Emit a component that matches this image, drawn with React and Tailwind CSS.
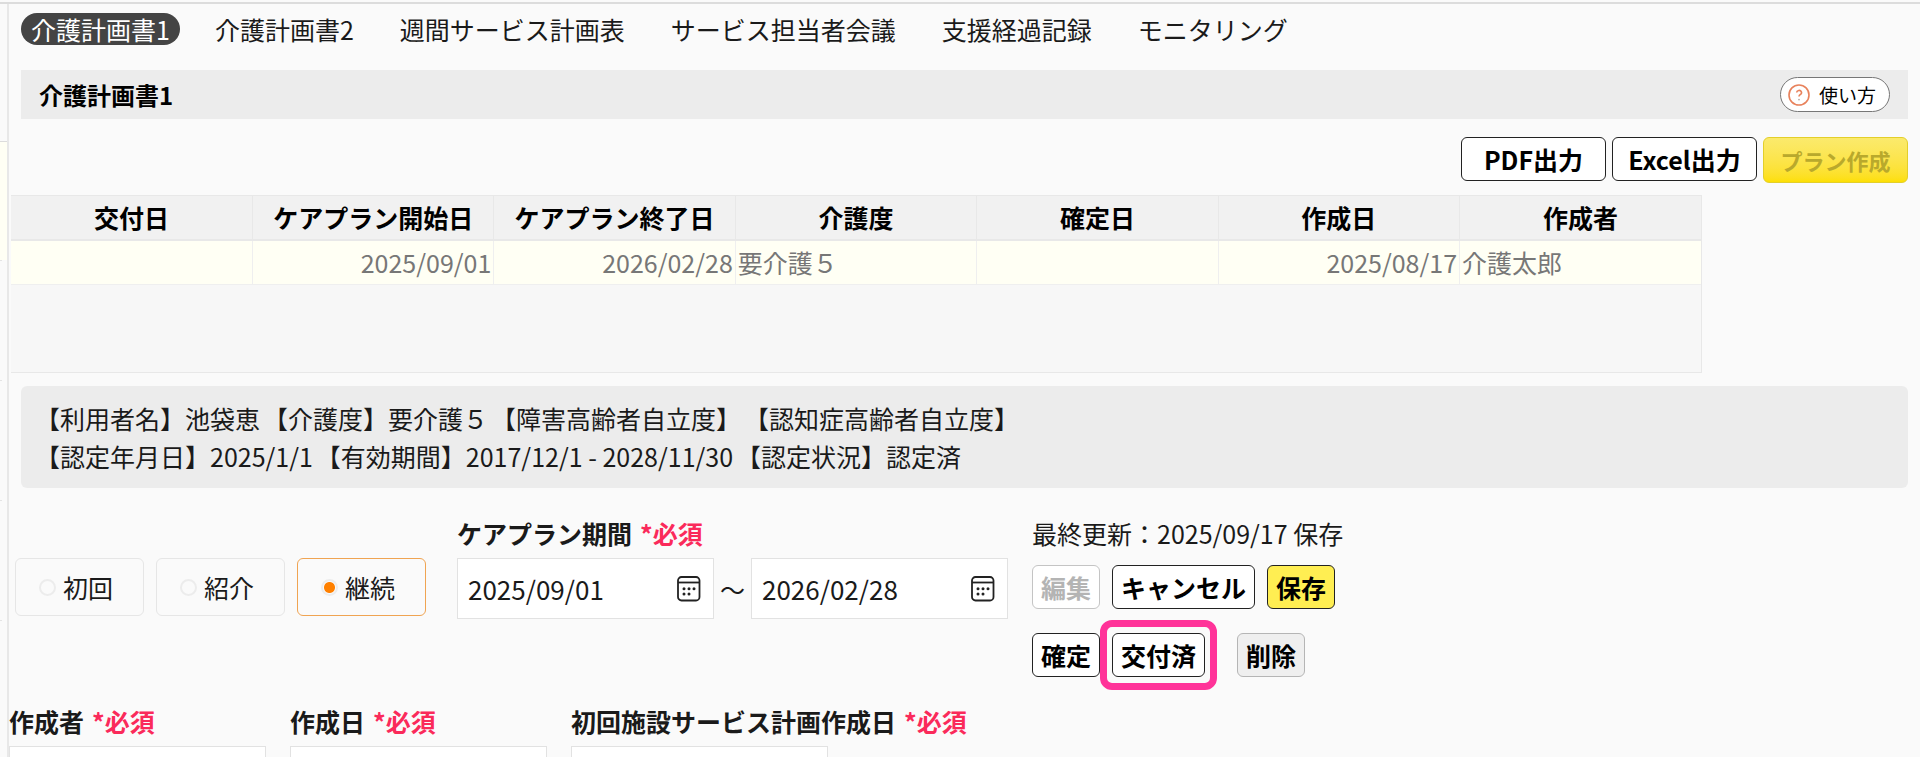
import React from 'react';
import clsx from 'clsx';

const tabs = [
  '介護計画書1',
  '介護計画書2',
  '週間サービス計画表',
  'サービス担当者会議',
  '支援経過記録',
  'モニタリング',
];

const columns = [
  { key: 'issued', label: '交付日', align: 'text-right' },
  { key: 'start', label: 'ケアプラン開始日', align: 'text-right' },
  { key: 'end', label: 'ケアプラン終了日', align: 'text-right' },
  { key: 'level', label: '介護度', align: 'text-left' },
  { key: 'fixed', label: '確定日', align: 'text-right' },
  { key: 'created', label: '作成日', align: 'text-right' },
  { key: 'author', label: '作成者', align: 'text-left' },
];

const plans = [
  {
    issued: '',
    start: '2025/09/01',
    end: '2026/02/28',
    level: '要介護５',
    fixed: '',
    created: '2025/08/17',
    author: '介護太郎',
  },
];

const userInfo = [
  ['【利用者名】池袋恵', '【介護度】要介護５', '【障害高齢者自立度】', '【認知症高齢者自立度】'],
  ['【認定年月日】2025/1/1', '【有効期間】2017/12/1 - 2028/11/30', '【認定状況】認定済'],
];

const planTypes = ['初回', '紹介', '継続'];

const HelpIcon = () => (
  <svg width="22" height="22" viewBox="0 0 22 22" fill="none" stroke="#e8825c" aria-hidden="true">
    <circle cx="11" cy="11" r="10" strokeWidth="1.6" />
    <path d="M8.7 8.6a2.4 2.2 0 1 1 3.6 1.9c-.9.5-1.3.9-1.3 2" strokeWidth="1.6" />
    <circle cx="11" cy="15.6" r=".9" fill="#b9a7a0" stroke="none" />
  </svg>
);

const CalendarIcon = () => (
  <svg width="24" height="26" viewBox="0 0 24 26" fill="none" stroke="#222" strokeWidth="1.8" aria-hidden="true">
    <rect x="1" y="1" width="21.5" height="23.5" rx="3.5" />
    <path d="M1 6.5h21.5" />
    <g fill="#222" stroke="none">
      <circle cx="7" cy="12.8" r="1.5" />
      <circle cx="12" cy="12.8" r="1.5" />
      <circle cx="17" cy="12.8" r="1.5" />
      <circle cx="7" cy="18" r="1.5" />
      <circle cx="12" cy="18" r="1.5" />
    </g>
  </svg>
);

const Required = () => <span className="ml-2 text-[#fa2a5a]">*必須</span>;

const DateInput = ({ id, label, value }) => (
  <div className="flex h-[61px] w-[257px] items-center border border-[#e2e2e2] bg-white pr-3 pl-[10px]">
    <input
      id={id}
      type="text"
      aria-label={label}
      defaultValue={value}
      className="min-w-0 flex-1 bg-transparent text-[26px] leading-9 outline-none"
    />
    <button type="button" aria-label="カレンダー">
      <CalendarIcon />
    </button>
  </div>
);

const variants = {
  default: 'border-[#222] bg-white text-black',
  primary: 'border-[#222] bg-[#ffee52] text-black',
  muted: 'border-[#b5b5b5] bg-[#efefef] text-black',
  disabled: 'border-[#c4c4c4] bg-white text-[#b4b4b4]',
};

const ActionButton = ({ variant = 'default', className, children, ...props }) => (
  <button
    type="button"
    className={clsx('h-11 rounded-md border px-2 font-bold', variants[variant], className)}
    {...props}
  >
    {children}
  </button>
);

const TextField = ({ id, label }) => (
  <div className="flex min-w-[257px] flex-col gap-[7px]">
    <label htmlFor={id} className="font-bold whitespace-nowrap">
      {label}
      <Required />
    </label>
    <input id={id} type="text" className="h-[61px] w-[257px] border border-[#e2e2e2] bg-white px-[10px]" />
  </div>
);

export default function App() {
  return (
    <div className="flex h-screen flex-col overflow-hidden border-t-2 border-[#fafafa] bg-[#fafafa] font-['Noto_Sans_CJK_JP',sans-serif] text-[25px] leading-9 text-[#1a1a1a]">
      <div className="flex flex-1 border-t-2 border-[#dcdcdc]">
        {/* 隣のパネルの端 */}
        <aside className="flex w-[9px] shrink-0 flex-col border-r-2 border-[#e8e8e8]">
          <div className="h-[138px] border-b border-[#dcdcdc]" />
          <div className="h-[118px] bg-[#fffff4]" />
          {[1, 2, 3, 4].map((row) => (
            <div key={row} className="h-30 w-[2px] border-t border-[#e4e4e4]" />
          ))}
        </aside>

        <main className="min-w-0 flex-1">
          <nav className="flex items-center gap-[46px] px-3 pt-[9px]">
            {tabs.map((tab, i) => (
              <a
                key={tab}
                href="#"
                className={clsx(
                  'leading-8 whitespace-nowrap',
                  i === 0 && '-mr-[11px] rounded-full bg-[#444] px-[10px] text-white'
                )}
              >
                {tab}
              </a>
            ))}
          </nav>

          <header className="mt-[25px] mr-3 ml-3 flex h-[49px] items-center justify-between bg-[#ececec] pr-[18px] pl-[18px]">
            <h1 className="text-2xl font-bold text-black">介護計画書1</h1>
            <button
              type="button"
              className="flex h-[35px] items-center gap-[9px] rounded-full border border-[#777] bg-white pr-[13px] pl-[7px] text-[19px] text-black"
            >
              <HelpIcon />
              使い方
            </button>
          </header>

          <div className="mt-[18px] mr-3 flex items-start justify-end gap-[6px]">
            <ActionButton className="w-[145px]">PDF出力</ActionButton>
            <ActionButton className="w-[145px]">Excel出力</ActionButton>
            <button
              type="button"
              disabled
              className="h-[46px] w-[145px] rounded-md border border-[#e3cf2a] bg-linear-to-b from-[#fbea6c] to-[#fddf00] text-[22px] font-bold text-[#b9a92c]"
            >
              プラン作成
            </button>
          </div>

          <div className="mt-3 ml-[2px] h-[178px] w-[1691px] max-w-full border border-l-0 border-[#e8e8e8] bg-[#f7f7f7]">
            <table className="w-full table-fixed border-collapse">
              <thead>
                <tr className="h-11 bg-[#f1f1f1] text-black">
                  {columns.map((col) => (
                    <th
                      key={col.key}
                      className="border-r border-b-2 border-[#e8e8e8] p-0 pb-[2px] font-bold last:border-r-0"
                    >
                      {col.label}
                    </th>
                  ))}
                </tr>
              </thead>
              <tbody>
                {plans.map((plan) => (
                  <tr key={plan.start} className="h-11 bg-[#fffff4] text-[#777]">
                    {columns.map((col) => (
                      <td
                        key={col.key}
                        className={clsx('border-r border-b border-[#efefef] px-[2px] py-0 last:border-r-0', col.align)}
                      >
                        {plan[col.key]}
                      </td>
                    ))}
                  </tr>
                ))}
              </tbody>
            </table>
          </div>

          <section className="mt-[13px] mr-3 ml-3 rounded-md bg-[#ececec] px-[14px] py-[13px]">
            {userInfo.map((line) => (
              <p key={line[0]} className="flex gap-[3px] leading-[38px] whitespace-nowrap">
                {line.map((item) => (
                  <span key={item}>{item}</span>
                ))}
              </p>
            ))}
          </section>

          <form>
            <div className="mt-[27px] flex items-start pl-[6px]">
              <fieldset className="mt-[43px] flex gap-3" aria-label="計画区分">
                {planTypes.map((type) => (
                  <label
                    key={type}
                    className="flex h-[58px] w-[129px] items-center gap-[7px] rounded-md border border-[#e6e6e6] pl-[23px] has-checked:border-[#f0a452]"
                  >
                    <input
                      type="radio"
                      name="planType"
                      defaultChecked={type === '継続'}
                      className="size-[17px] appearance-none rounded-full border-2 border-[#ececec] checked:bg-[radial-gradient(circle,#ff8000_5px,transparent_6px)]"
                    />
                    {type}
                  </label>
                ))}
              </fieldset>

              <div className="ml-[31px]">
                <label htmlFor="planStart" className="mb-[7px] block font-bold">
                  ケアプラン期間
                  <Required />
                </label>
                <div className="flex items-center">
                  <DateInput id="planStart" label="開始日" value="2025/09/01" />
                  <span className="w-[37px] text-center">～</span>
                  <DateInput id="planEnd" label="終了日" value="2026/02/28" />
                </div>
              </div>

              <div className="ml-6">
                <p>最終更新：2025/09/17 保存</p>
                <div className="mt-[14px] flex gap-3">
                  <ActionButton variant="disabled" disabled>
                    編集
                  </ActionButton>
                  <ActionButton>キャンセル</ActionButton>
                  <ActionButton variant="primary">保存</ActionButton>
                </div>
                <div className="mt-6 flex gap-3">
                  <ActionButton>確定</ActionButton>
                  <div className="relative mr-5">
                    <ActionButton>交付済</ActionButton>
                    <div className="pointer-events-none absolute -inset-x-3 -inset-y-[13px] rounded-xl border-[7px] border-[#ff3399]" />
                  </div>
                  <ActionButton variant="muted">削除</ActionButton>
                </div>
              </div>
            </div>

            <div className="mt-[26px] flex gap-6">
              <TextField id="author" label="作成者" />
              <TextField id="createdOn" label="作成日" />
              <TextField id="firstPlanOn" label="初回施設サービス計画作成日" />
            </div>
          </form>
        </main>
      </div>
    </div>
  );
}
